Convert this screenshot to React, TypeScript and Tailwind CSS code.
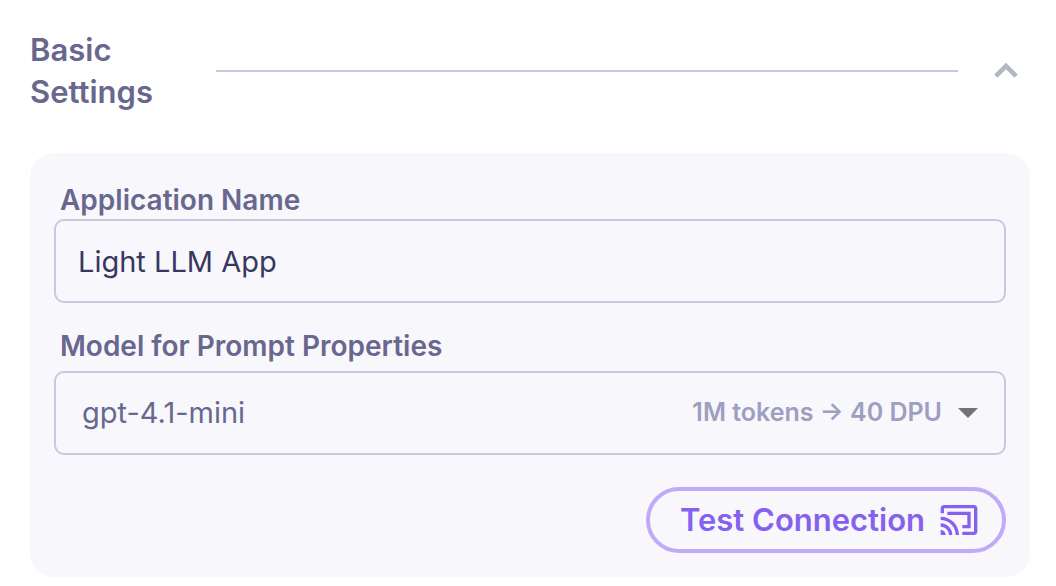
import { useState } from "react";

const CastIcon = () => (
  <svg className="size-10 shrink-0" viewBox="0 0 24 24" fill="currentColor" aria-hidden="true">
    <path d="M21 3H3c-1.1 0-2 .9-2 2v3h2V5h18v14h-7v2h7c1.1 0 2-.9 2-2V5c0-1.1-.9-2-2-2z" />
    <path d="M5 7h14v10h-5v-2h3V9H5z" />
    <path d="M1 18v3h3c0-1.66-1.34-3-3-3z" />
    <path d="M1 14v2c2.76 0 5 2.24 5 5h2c0-3.87-3.13-7-7-7z" />
    <path d="M1 10v2c4.97 0 9 4.03 9 9h2c0-6.08-4.93-11-11-11z" />
  </svg>
);

export default function App() {
  const [open, setOpen] = useState(true);
  const [name, setName] = useState("Light LLM App");

  return (
    <main className="min-h-screen bg-white pt-[29px] pr-[26px] pb-2 pl-[30px] font-['Inter',sans-serif] text-[#68688f]">
      <header className="flex items-center gap-9 pr-3">
        <h2 className="w-[150px] pr-5 text-[31px] leading-[42px] font-semibold">Basic Settings</h2>
        <div className="h-0.5 flex-1 bg-[#c8c9df]" />
        <button
          type="button"
          aria-label="Toggle basic settings"
          aria-expanded={open}
          onClick={() => setOpen(!open)}
          className="text-[#b0b9c1]"
        >
          <svg className={open ? "h-4 w-6" : "h-4 w-6 rotate-180"} viewBox="0 0 24 16" fill="none">
            <path d="M1.8 13.2 12 3l10.2 10.2" stroke="currentColor" strokeWidth="4.6" />
          </svg>
        </button>
      </header>

      {open && (
        <section className="mt-10 rounded-3xl bg-[#f8f7fc] p-6">
          <label htmlFor="app-name" className="block px-1.5 pt-1 text-[28px] leading-[38px] font-semibold">
            Application Name
          </label>
          <input
            id="app-name"
            value={name}
            onChange={(e) => setName(e.target.value)}
            className="block h-21 w-full rounded-[10px] border-2 border-[#c8c9df] bg-transparent px-[22px] text-[29px] text-[#38375f] outline-none"
          />

          <label htmlFor="model" className="mt-6 mb-1.5 block px-1.5 text-[28px] leading-[38px] font-semibold">
            Model for Prompt Properties
          </label>
          <div className="relative">
            <select
              id="model"
              className="block h-21 w-full appearance-none rounded-[10px] border-2 border-[#c8c9df] bg-transparent pr-80 pl-[26px] text-[29px] outline-none"
            >
              <option>gpt-4.1-mini</option>
            </select>
            <div className="pointer-events-none absolute inset-y-0 right-7 flex items-center gap-4 text-[25px] font-semibold text-[#9e9fc0]">
              <span>1M tokens → 40 DPU</span>
              <svg className="h-2.5 w-5" viewBox="0 0 20 10" fill="#737373">
                <path d="M0 0h20L10 10z" />
              </svg>
            </div>
          </div>

          <div className="mt-8 flex justify-end">
            <button
              type="button"
              className="flex h-[66px] items-center gap-3.5 rounded-full border-4 border-[#c0abf6] pr-[23px] pl-[30px] text-[31px] font-semibold text-[#8661f0]"
            >
              Test Connection
              <CastIcon />
            </button>
          </div>
        </section>
      )}
    </main>
  );
}
